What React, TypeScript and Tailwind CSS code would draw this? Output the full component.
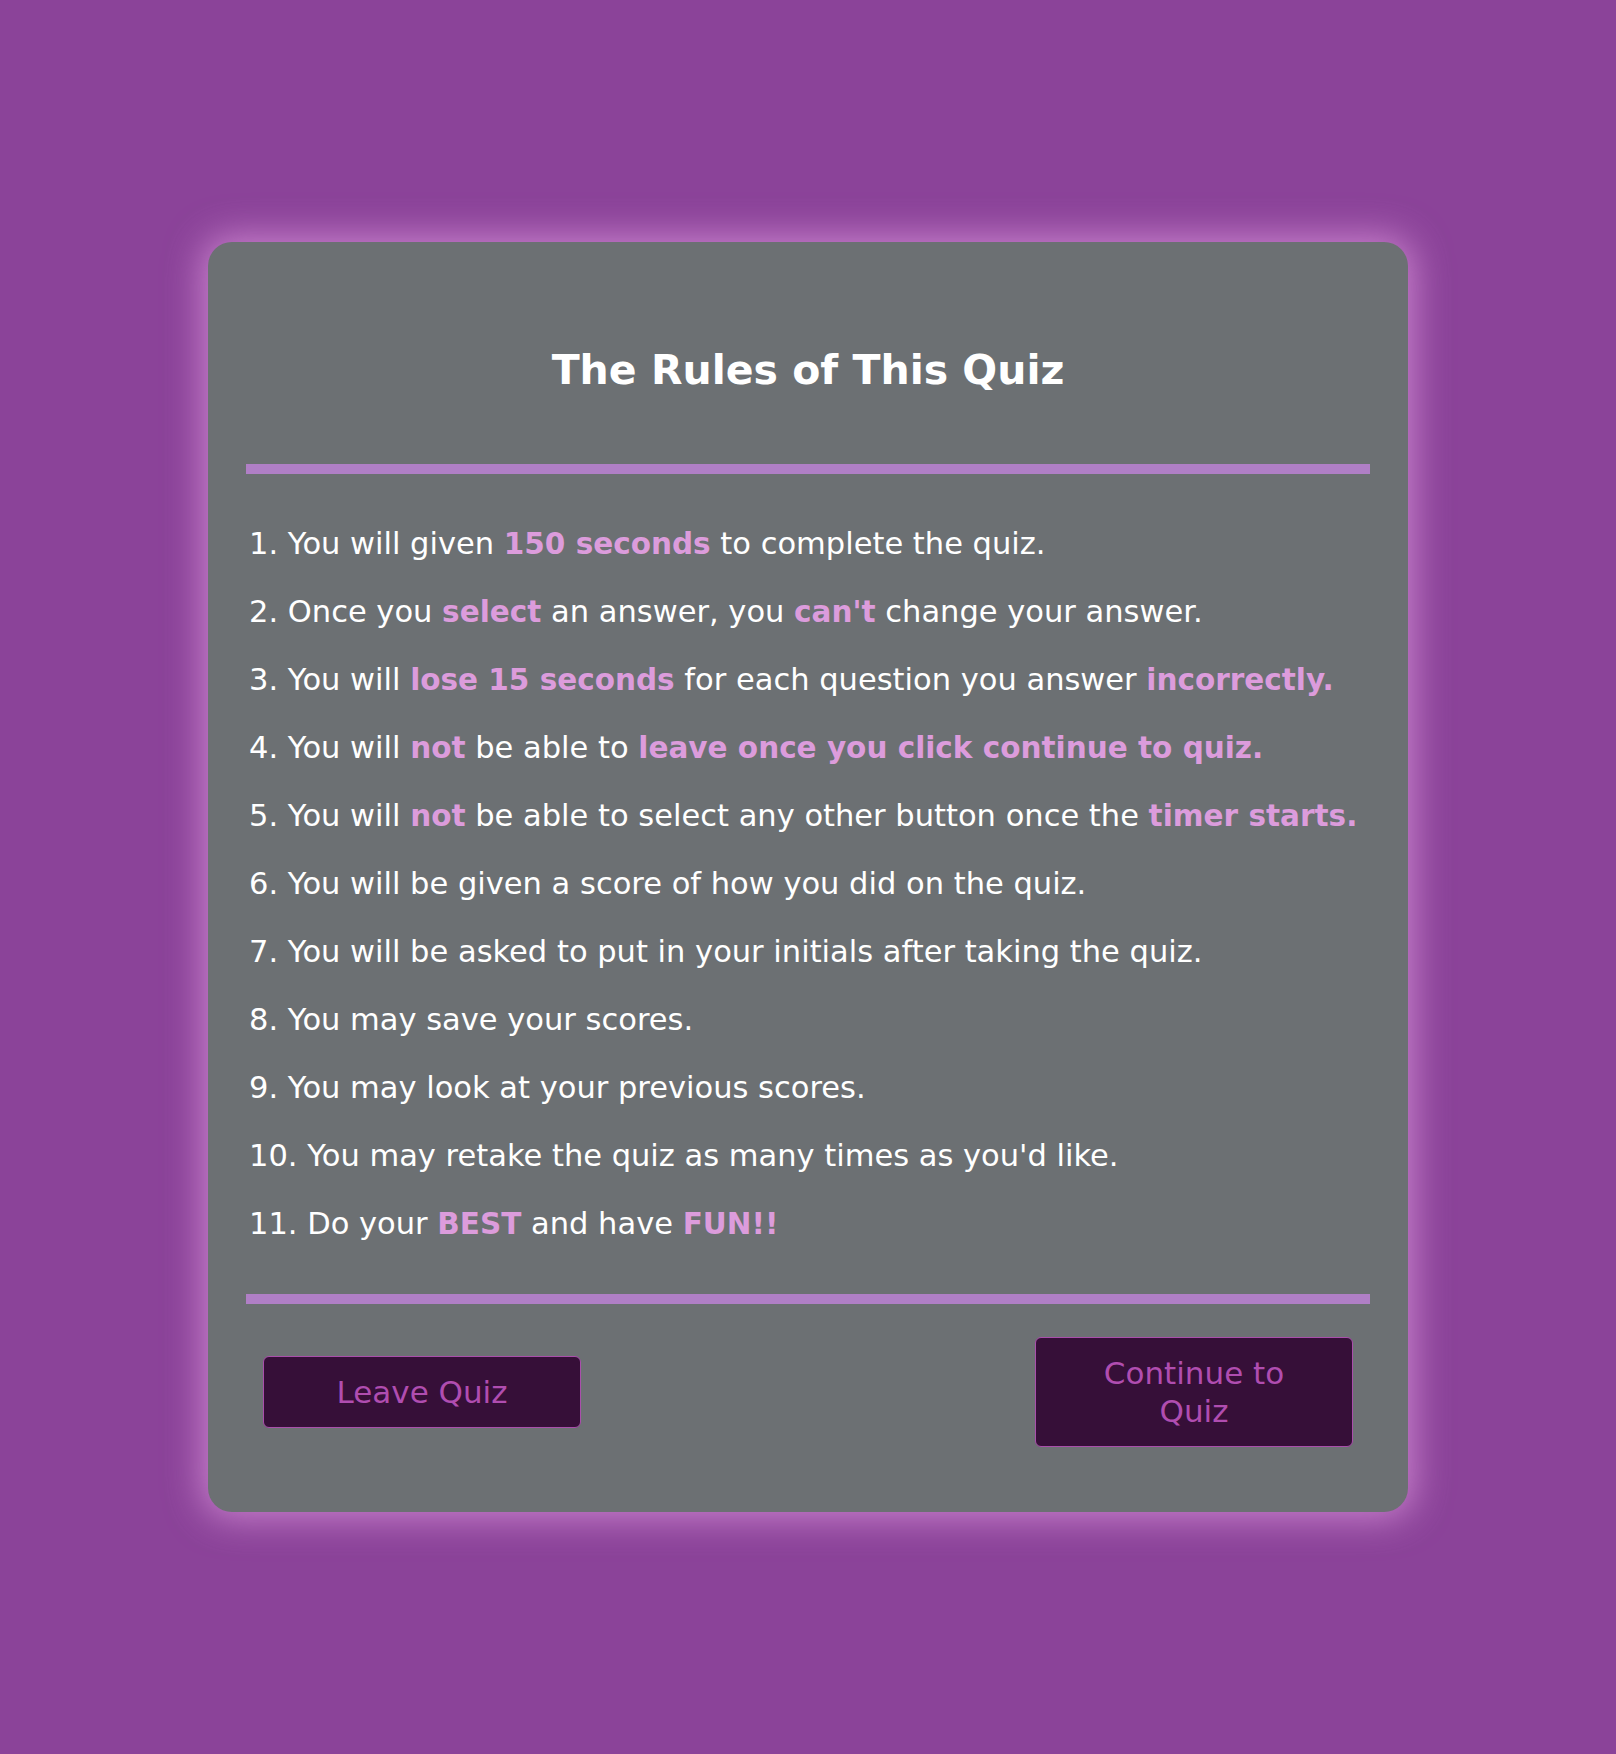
import React from "react";

type Part = { t: string; hl?: boolean };

const rules: Part[][] = [
  [{ t: "1. You will given " }, { t: "150 seconds", hl: true }, { t: " to complete the quiz." }],
  [{ t: "2. Once you " }, { t: "select", hl: true }, { t: " an answer, you " }, { t: "can't", hl: true }, { t: " change your answer." }],
  [{ t: "3. You will " }, { t: "lose 15 seconds", hl: true }, { t: " for each question you answer " }, { t: "incorrectly.", hl: true }],
  [{ t: "4. You will " }, { t: "not", hl: true }, { t: " be able to " }, { t: "leave once you click continue to quiz.", hl: true }],
  [{ t: "5. You will " }, { t: "not", hl: true }, { t: " be able to select any other button once the " }, { t: "timer starts.", hl: true }],
  [{ t: "6. You will be given a score of how you did on the quiz." }],
  [{ t: "7. You will be asked to put in your initials after taking the quiz." }],
  [{ t: "8. You may save your scores." }],
  [{ t: "9. You may look at your previous scores." }],
  [{ t: "10. You may retake the quiz as many times as you'd like." }],
  [{ t: "11. Do your " }, { t: "BEST", hl: true }, { t: " and have " }, { t: "FUN!!", hl: true }],
];

export default function App() {
  return (
    <div
      className="min-h-screen flex items-center justify-center bg-[#8b4399]"
      style={{ fontFamily: '"DejaVu Sans", "Lucida Grande", sans-serif' }}
    >
      <div className="w-[1200px] rounded-[24px] bg-[#6c7073] px-[38px] pt-[102px] pb-[65px] shadow-[0_0_36px_6px_rgba(222,150,222,0.75)]">
        <h1 className="text-center text-[41px] leading-[52px] font-bold text-white">
          The Rules of This Quiz
        </h1>

        <div className="mt-[68px] h-[10px] bg-[#b07fc6]" />

        <ol className="py-[36px] pl-[3px]">
          {rules.map((parts, i) => (
            <li key={i} className="h-[68px] whitespace-nowrap text-[30.5px] leading-[68px] text-white">
              {parts.map((p, j) =>
                p.hl ? (
                  <span key={j} className="text-[29.5px] font-bold text-[#dc9cdc]">
                    {p.t}
                  </span>
                ) : (
                  <span key={j}>{p.t}</span>
                )
              )}
            </li>
          ))}
        </ol>

        <div className="h-[10px] bg-[#b07fc6]" />

        <div className="mt-[33px] flex items-center justify-between px-[17px]">
          <button className="w-[318px] rounded-[6px] border-[1.5px] border-[#a94fab] bg-[#360f38] py-[16px] text-[31px] leading-[38px] text-[#b04db0]">
            Leave Quiz
          </button>
          <button className="w-[318px] rounded-[6px] border-[1.5px] border-[#a94fab] bg-[#360f38] py-[16px] text-[31px] leading-[38px] text-[#b04db0]">
            Continue to
            <br />
            Quiz
          </button>
        </div>
      </div>
    </div>
  );
}
